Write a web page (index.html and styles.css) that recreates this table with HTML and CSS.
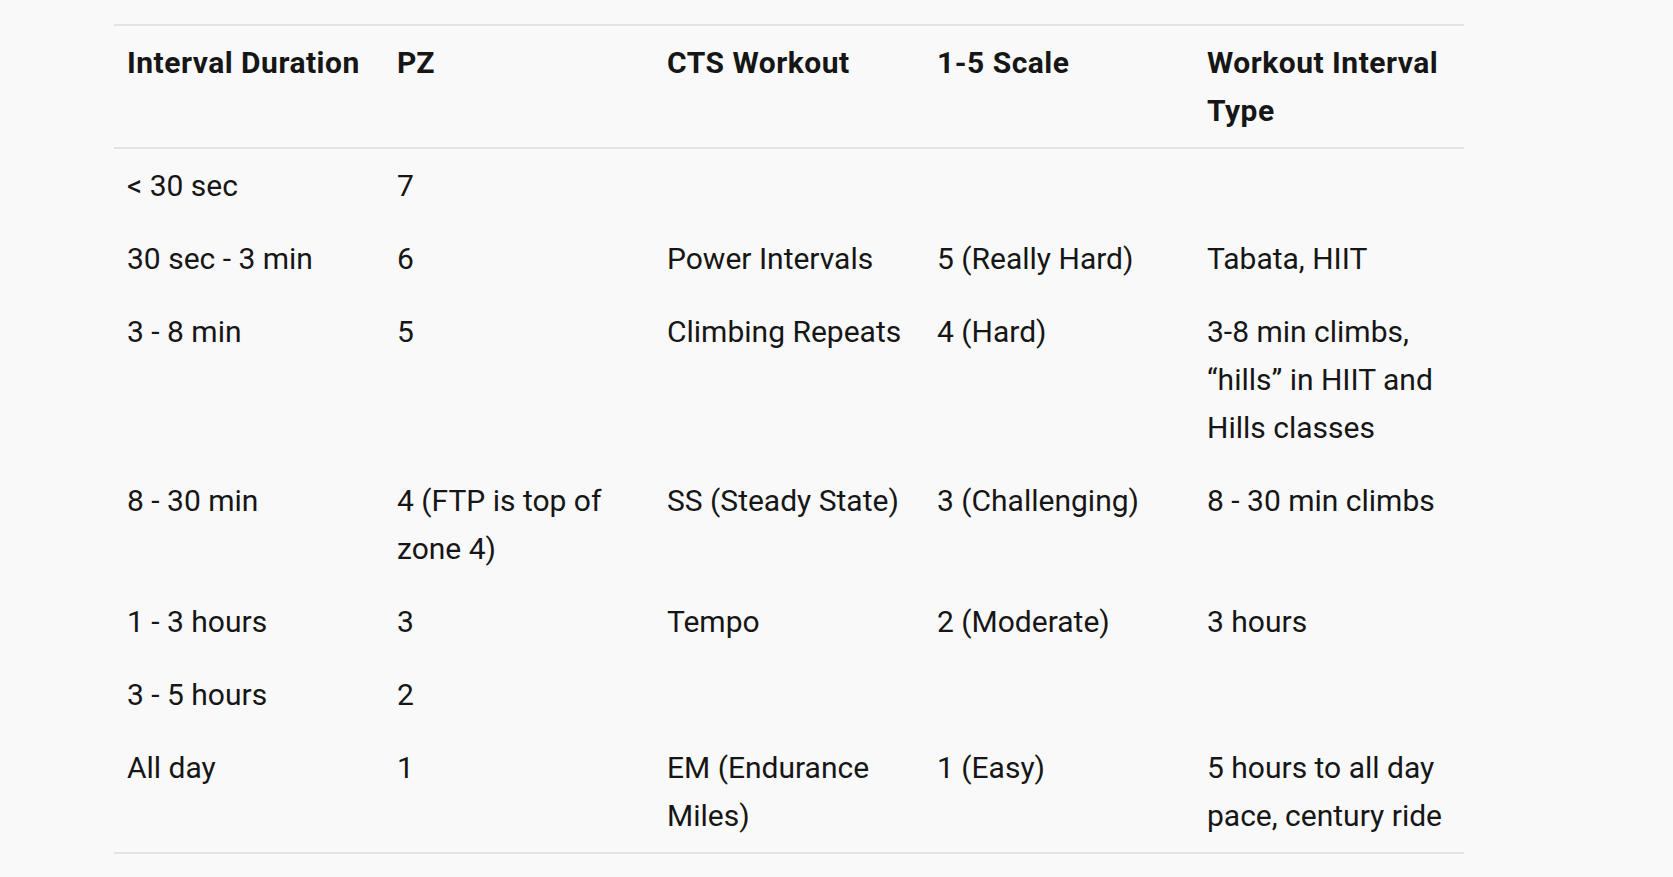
FILE: index.html
```html
<!DOCTYPE html>
<html lang="en">
<head>
<meta charset="utf-8">
<title>Interval Training Zones</title>
<link rel="stylesheet" href="styles.css">
</head>
<body>
<main class="page">
  <table class="zones">
    <thead>
      <tr>
        <th>Interval Duration</th>
        <th>PZ</th>
        <th>CTS Workout</th>
        <th>1-5 Scale</th>
        <th>Workout Interval Type</th>
      </tr>
    </thead>
    <tbody>
      <tr>
        <td>&lt; 30 sec</td>
        <td>7</td>
        <td></td>
        <td></td>
        <td></td>
      </tr>
      <tr>
        <td>30 sec - 3 min</td>
        <td>6</td>
        <td>Power Intervals</td>
        <td>5 (Really Hard)</td>
        <td>Tabata, HIIT</td>
      </tr>
      <tr>
        <td>3 - 8 min</td>
        <td>5</td>
        <td>Climbing Repeats</td>
        <td>4 (Hard)</td>
        <td>3-8 min climbs, “hills” in HIIT and Hills classes</td>
      </tr>
      <tr>
        <td>8 - 30 min</td>
        <td>4 (FTP is top of zone 4)</td>
        <td>SS (Steady State)</td>
        <td>3 (Challenging)</td>
        <td>8 - 30 min climbs</td>
      </tr>
      <tr>
        <td>1 - 3 hours</td>
        <td>3</td>
        <td>Tempo</td>
        <td>2 (Moderate)</td>
        <td>3 hours</td>
      </tr>
      <tr>
        <td>3 - 5 hours</td>
        <td>2</td>
        <td></td>
        <td></td>
        <td></td>
      </tr>
      <tr>
        <td>All day</td>
        <td>1</td>
        <td>EM (Endurance Miles)</td>
        <td>1 (Easy)</td>
        <td>5 hours to all day pace, century ride</td>
      </tr>
    </tbody>
  </table>
</main>
</body>
</html>
```
FILE: styles.css
```css
html, body {
  margin: 0;
  padding: 0;
  background: #f9f9f9;
}

body {
  font-family: Roboto, "Liberation Sans", Arial, sans-serif;
  color: #161616;
}

.page {
  padding: 24px 0 0 114px;
}

.zones {
  width: 1350px;
  border-collapse: collapse;
  table-layout: fixed;
  font-size: 30px;
  line-height: 48px;
  border-top: 2px solid #e4e4e4;
  border-bottom: 2px solid #e4e4e4;
}

.zones th,
.zones td {
  text-align: left;
  vertical-align: top;
  padding: 12.5px 8px 12.5px 13px;
}

.zones th {
  font-weight: 700;
  letter-spacing: 0.5px;
}

.zones thead tr {
  border-bottom: 2px solid #e4e4e4;
}

.zones td {
  font-weight: 400;
}
```
